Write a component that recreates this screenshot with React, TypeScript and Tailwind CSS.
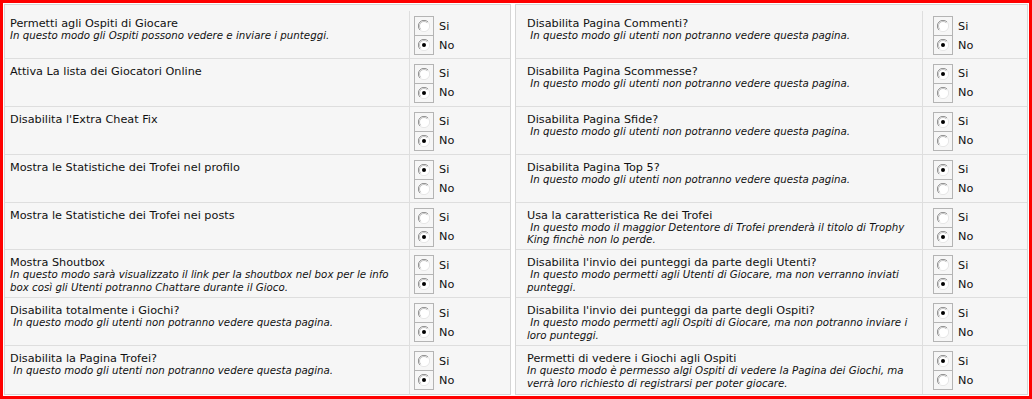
import React from "react";

//---------------------------------Interfaces---------------------------------
interface Setting {
  title: string;
  desc?: string[];
  indent?: boolean;
  value: "si" | "no";
}

//---------------------------------Data---------------------------------
const leftSettings: Setting[] = [
  {
    title: "Permetti agli Ospiti di Giocare",
    desc: ["In questo modo gli Ospiti possono vedere e inviare i punteggi."],
    value: "no",
  },
  { title: "Attiva La lista dei Giocatori Online", value: "no" },
  { title: "Disabilita l'Extra Cheat Fix", value: "no" },
  { title: "Mostra le Statistiche dei Trofei nel profilo", value: "si" },
  { title: "Mostra le Statistiche dei Trofei nei posts", value: "no" },
  {
    title: "Mostra Shoutbox",
    desc: [
      "In questo modo sarà visualizzato il link per la shoutbox nel box per le info",
      "box così gli Utenti potranno Chattare durante il Gioco.",
    ],
    value: "no",
  },
  {
    title: "Disabilita totalmente i Giochi?",
    desc: ["In questo modo gli utenti non potranno vedere questa pagina."],
    indent: true,
    value: "no",
  },
  {
    title: "Disabilita la Pagina Trofei?",
    desc: ["In questo modo gli utenti non potranno vedere questa pagina."],
    indent: true,
    value: "no",
  },
];

const rightSettings: Setting[] = [
  {
    title: "Disabilita Pagina Commenti?",
    desc: ["In questo modo gli utenti non potranno vedere questa pagina."],
    indent: true,
    value: "no",
  },
  {
    title: "Disabilita Pagina Scommesse?",
    desc: ["In questo modo gli utenti non potranno vedere questa pagina."],
    indent: true,
    value: "si",
  },
  {
    title: "Disabilita Pagina Sfide?",
    desc: ["In questo modo gli utenti non potranno vedere questa pagina."],
    indent: true,
    value: "si",
  },
  {
    title: "Disabilita Pagina Top 5?",
    desc: ["In questo modo gli utenti non potranno vedere questa pagina."],
    indent: true,
    value: "si",
  },
  {
    title: "Usa la caratteristica Re dei Trofei",
    desc: [
      "In questo modo il maggior Detentore di Trofei prenderà il titolo di Trophy",
      "King finchè non lo perde.",
    ],
    indent: true,
    value: "no",
  },
  {
    title: "Disabilita l'invio dei punteggi da parte degli Utenti?",
    desc: [
      "In questo modo permetti agli Utenti di Giocare, ma non verranno inviati",
      "punteggi.",
    ],
    indent: true,
    value: "no",
  },
  {
    title: "Disabilita l'invio dei punteggi da parte degli Ospiti?",
    desc: [
      "In questo modo permetti agli Ospiti di Giocare, ma non potranno inviare i",
      "loro punteggi.",
    ],
    indent: true,
    value: "si",
  },
  {
    title: "Permetti di vedere i Giochi agli Ospiti",
    desc: [
      "In questo modo è permesso algi Ospiti di vedere la Pagina dei Giochi, ma",
      "verrà loro richiesto di registrarsi per poter giocare.",
    ],
    value: "si",
  },
];

//---------------------------------Radio glyph (old windows style)---------------------------------
const RadioDot: React.FC<{ checked: boolean }> = ({ checked }) => (
  <svg width="12" height="12" viewBox="0 0 12 12">
    <circle cx="6" cy="6" r="5.5" fill="#ffffff" />
    {/* shadow on top-left, light on bottom-right */}
    <path d="M10 2 A5.5 5.5 0 0 0 2 10" fill="none" stroke="#8e8e8e" strokeWidth="1" />
    <path d="M9.2 2.8 A4.5 4.5 0 0 0 2.8 9.2" fill="none" stroke="#c4c4c4" strokeWidth="1" />
    <path d="M10 2 A5.5 5.5 0 0 1 2 10" fill="none" stroke="#e6e6e6" strokeWidth="1" />
    {checked && <circle cx="6" cy="6" r="2" fill="#000000" />}
  </svg>
);

const RadioRow: React.FC<{ label: string; checked: boolean; first?: boolean }> = ({
  label,
  checked,
  first,
}) => (
  <div className={`flex items-center h-[20px] ${first ? "" : "-mt-px"}`}>
    <span className="w-[20px] h-[20px] border border-[#b4b4b4] flex items-center justify-center">
      <RadioDot checked={checked} />
    </span>
    <span className="ml-[5px] text-[11.25px] leading-[13px] text-[#111]">{label}</span>
  </div>
);

//---------------------------------Table---------------------------------
interface TableProps {
  settings: Setting[];
  width: string;
  labelWidth: string;
  labelPad: string;
  radioPad: string;
}

const SettingsTable: React.FC<TableProps> = ({ settings, width, labelWidth, labelPad, radioPad }) => (
  <div className={`${width} h-full border border-[#d6d6d6] bg-[#f6f6f6] flex flex-col`}>
    {settings.map((s, i) => (
      <div
        key={i}
        className={`flex ${i === 0 ? "h-[54px] pt-[6px]" : "h-[48px]"} ${
          i < settings.length - 1 ? "border-b border-[#dedede]" : ""
        }`}
      >
        <div className={`${labelWidth} ${labelPad} h-full border-r border-[#dedede] pt-[6px] whitespace-nowrap`}>
          <div className="text-[11.25px] leading-[13px] text-[#111]">{s.title}</div>
          {s.desc && (
            <div className="-mt-px text-[10.25px] leading-[12.5px] italic text-[#111]">
              {s.desc.map((line, j) => (
                <div key={j}>
                  {j === 0 && s.indent ? "\u00a0" : ""}
                  {line}
                </div>
              ))}
            </div>
          )}
        </div>
        <div className={`flex-1 ${radioPad} pt-[5px]`}>
          <RadioRow label="Si" checked={s.value === "si"} first />
          <RadioRow label="No" checked={s.value === "no"} />
        </div>
      </div>
    ))}
  </div>
);

//---------------------------------UI---------------------------------
const App: React.FC = () => {
  return (
    <div className="w-[1032px] h-[399px] border-[3px] border-[#ff0000] bg-white p-px flex gap-[4px] font-['DejaVu_Sans',sans-serif]">
      <SettingsTable
        settings={leftSettings}
        width="w-[507px]"
        labelWidth="w-[405px]"
        labelPad="pl-[5px]"
        radioPad="pl-[4px]"
      />
      <SettingsTable
        settings={rightSettings}
        width="w-[513px]"
        labelWidth="w-[407px]"
        labelPad="pl-[11px]"
        radioPad="pl-[10px]"
      />
    </div>
  );
};

export default App;
